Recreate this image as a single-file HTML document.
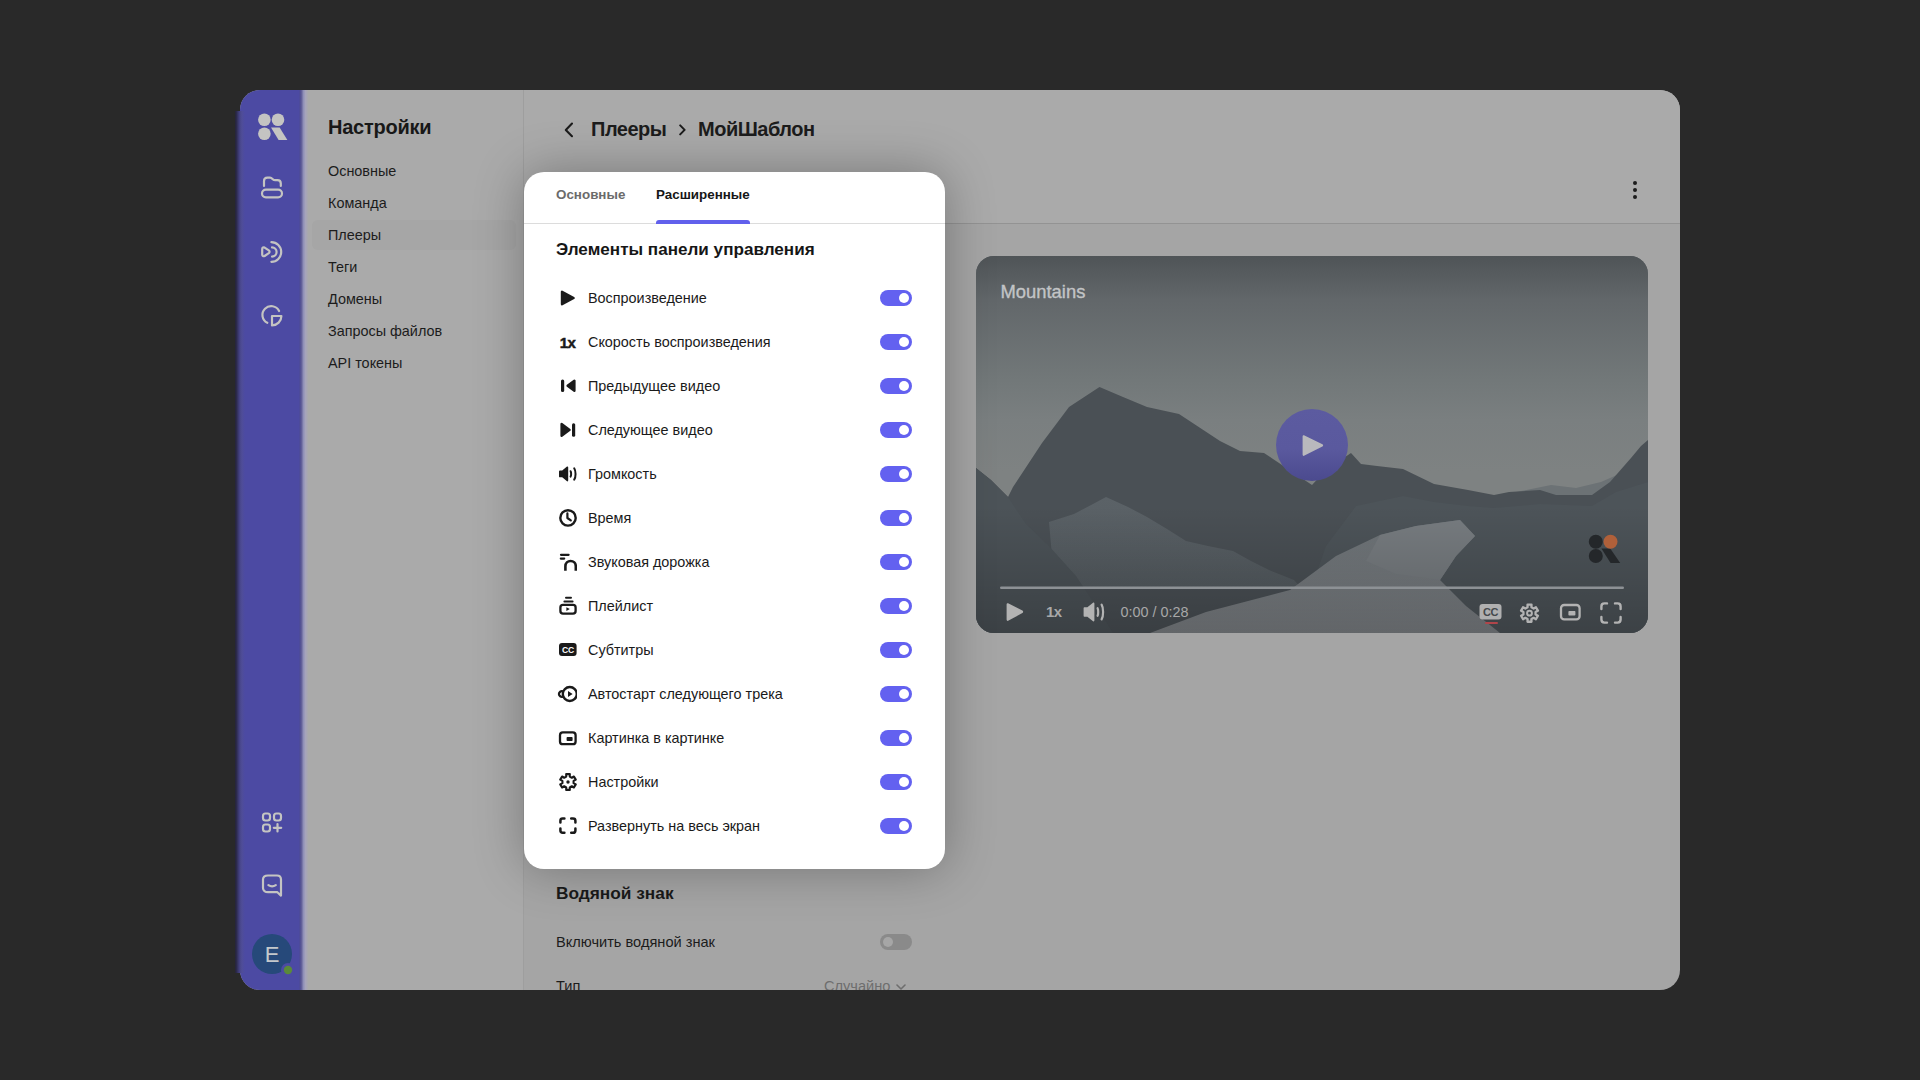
<!DOCTYPE html>
<html><head><meta charset="utf-8">
<style>
*{margin:0;padding:0;box-sizing:border-box}
html,body{width:1920px;height:1080px;overflow:hidden;background:#292929;font-family:"Liberation Sans",sans-serif}
.abs{position:absolute}
.win{position:absolute;left:240px;top:90px;width:1440px;height:900px;border-radius:20px;overflow:hidden;background:#a5a5a5}
.hdr{position:absolute;left:0;top:0;width:1156px;height:133px;background:#aaaaaa}
.side{position:absolute;left:0;top:0;width:64px;height:900px;background:#4c4aa3}
.nav{position:absolute;left:64px;top:0;width:220px;height:900px;background:#aaaaaa;border-right:1px solid #9e9e9e}
.navt{position:absolute;left:24px;top:26px;font-size:20px;letter-spacing:-0.25px;font-weight:bold;color:#181818;white-space:nowrap}
.nav .it{position:absolute;left:8px;width:204px;height:30px;border-radius:6px;font-size:14.4px;color:#1c1c1c;padding-left:16px;line-height:30px;white-space:nowrap}
.nav .it.on{background:#a6a6a6}
.main{position:absolute;left:284px;top:0;width:1156px;height:900px}
.crumb{position:absolute;top:0;font-size:20px;letter-spacing:-0.5px;font-weight:bold;color:#1c1c1c;white-space:nowrap}
.hline{position:absolute;left:0;top:133px;width:1156px;height:1px;background:#939393}
.kebab{position:absolute;width:4px;height:4px;border-radius:50%;background:#1c1c1c}
.wm-h{position:absolute;left:32px;top:793px;font-size:17.3px;font-weight:bold;color:#1a1a1a;white-space:nowrap}
.wm-t{position:absolute;left:32px;font-size:14.6px;color:#1c1c1c;white-space:nowrap}
.tgoff{position:absolute;left:356px;top:844px;width:32px;height:16px;border-radius:8px;background:#8a8a8a}
.tgoff::after{content:"";position:absolute;left:3px;top:3px;width:10px;height:10px;border-radius:50%;background:#a6a6a6}
.shade{position:absolute;left:0;top:0;width:1440px;height:900px;pointer-events:none}
.panel{position:absolute;left:524px;top:172px;width:421px;height:697px;background:#fff;border-radius:20px;box-shadow:0 0 50px rgba(0,0,0,0.3)}
.tab{position:absolute;top:15px;font-size:13.4px;font-weight:bold;white-space:nowrap}
.ph{position:absolute;left:32px;top:68px;font-size:17.1px;font-weight:bold;color:#161616;white-space:nowrap}
.row{position:absolute;left:32px;width:356px;height:44px}
.row .ic{position:absolute;left:1px;top:12px;width:20px;height:20px}
.row .tx{position:absolute;left:32px;top:-0.5px;line-height:44px;font-size:14.4px;color:#1a1a1a;white-space:nowrap}
.tg{position:absolute;left:324px;top:14px;width:32px;height:16px;border-radius:8px;background:#6361f0}
.tg::after{content:"";position:absolute;left:19px;top:3px;width:10px;height:10px;border-radius:50%;background:#fff}

</style></head>
<body>
<div class="win">
  <div class="side">
    <svg class="abs" style="left:0;top:0" width="64" height="900" viewBox="0 0 64 900">
      <g fill="#c4c4c2">
        <circle cx="24.4" cy="29.7" r="6.3"/><circle cx="38" cy="29.7" r="6.3"/><circle cx="24.4" cy="43.7" r="6.3"/>
        <path d="M31 37.4H39.6L47.4 50H38.6Z"/>
      </g>
      <g fill="none" stroke="#c4c4c2" stroke-width="2.2" stroke-linecap="round" stroke-linejoin="round">
        <path d="M24 96V91C24 88.6 25.2 87.6 27.4 87.6H30C31.4 87.6 32 88.4 32.8 89.2C33.5 90 34.2 90.2 35.4 90.2H37.4C39.6 90.2 40.8 91.4 40.8 93.4V96"/>
        <rect x="22" y="99.6" width="20" height="7.8" rx="3.9"/>
        <path d="M22.2 159C22.2 157.6 23.4 157 24.6 157.6L28.8 160.4C29.8 161.2 29.8 162.4 28.8 163.2L24.6 166C23.4 166.6 22.2 166 22.2 164.6Z"/>
        <path d="M32 157.4A4.6 4.6 0 0 1 32 166.6"/>
        <path d="M31.4 152.2A9.8 9.8 0 0 1 31.4 171.8"/>
        <path d="M39.1 221A8.8 8.8 0 1 0 27.3 232.8"/>
        <path d="M32 226H41.4A9.4 9.4 0 0 1 32 235.4Z"/>
        <rect x="23" y="723.5" width="7" height="7" rx="2.4"/>
        <rect x="34" y="723.5" width="7" height="7" rx="2.4"/>
        <rect x="23" y="734.5" width="7" height="7" rx="2.4"/>
        <path d="M37.5 734V741.5M33.8 737.8H41.2"/>
        <path d="M28 785.5H37C39.4 785.5 41 787 41 789.6V805.6L37.4 802.2H28C25.2 802.2 23 800.6 23 798V789.6C23 787 25.2 785.5 28 785.5Z"/>
        <path d="M28.4 795.2C30.8 796.8 33.4 796.8 35.8 795.2"/>
      </g>
      <circle cx="32" cy="864" r="20" fill="#26497a"/>
      <text x="32" y="872.2" text-anchor="middle" font-family="Liberation Sans" font-size="22" fill="#c4c8cc">E</text>
      <circle cx="48" cy="880" r="7" fill="#4c4aa3"/>
      <circle cx="48" cy="880" r="4.2" fill="#5a8a3a"/>
    </svg>
  </div>

  <div class="nav">
    <div class="navt">Настройки</div>
    <div class="it" style="top:66px">Основные</div>
    <div class="it" style="top:98px">Команда</div>
    <div class="it on" style="top:130px">Плееры</div>
    <div class="it" style="top:162px">Теги</div>
    <div class="it" style="top:194px">Домены</div>
    <div class="it" style="top:226px">Запросы файлов</div>
    <div class="it" style="top:258px">API токены</div>
  </div>
  <div class="main">
    <div class="hdr"></div>
    <svg class="abs" style="left:38px;top:31px" width="14" height="18" viewBox="0 0 14 18"><path d="M10 2.6L3.8 8.9L10 15.2" fill="none" stroke="#1c1c1c" stroke-width="2.1" stroke-linecap="round" stroke-linejoin="round"/></svg>
    <div class="crumb" style="left:67px;top:28px">Плееры</div>
    <svg class="abs" style="left:152.5px;top:34px" width="10" height="14" viewBox="0 0 10 14"><path d="M3.2 1.4L7.6 5.9L3.2 10.4" fill="none" stroke="#1c1c1c" stroke-width="2" stroke-linecap="round" stroke-linejoin="round"/></svg>
    <div class="crumb" style="left:174px;top:28px">МойШаблон</div>
    <div class="hline"></div>
    <div class="kebab" style="left:1109px;top:91px"></div>
    <div class="kebab" style="left:1109px;top:98px"></div>
    <div class="kebab" style="left:1109px;top:105px"></div>
    <div class="abs" style="left:452px;top:166px;width:672px;height:377px;border-radius:18px;overflow:hidden;background:#5a6166">
      <svg width="672" height="377" viewBox="0 0 672 377" style="position:absolute;left:0;top:0">
        <defs>
          <linearGradient id="sky" x1="0" y1="0" x2="0" y2="1">
            <stop offset="0" stop-color="#4f5457"/>
            <stop offset="0.117" stop-color="#62676a"/>
            <stop offset="0.33" stop-color="#727879"/>
            <stop offset="0.435" stop-color="#7a7f80"/>
            <stop offset="0.57" stop-color="#7e8282"/>
            <stop offset="1" stop-color="#7e8282"/>
          </linearGradient>
          <linearGradient id="val" x1="0" y1="0" x2="0" y2="1"><stop offset="0" stop-color="#5b6267"/><stop offset="1" stop-color="#545b60"/></linearGradient>
          <linearGradient id="bot" x1="0" y1="0" x2="0" y2="1">
            <stop offset="0" stop-color="#000" stop-opacity="0"/>
            <stop offset="1" stop-color="#000" stop-opacity="0.22"/>
          </linearGradient>
          <linearGradient id="snow" x1="0" y1="0" x2="0" y2="1">
            <stop offset="0" stop-color="#6c7276"/>
            <stop offset="1" stop-color="#7e8286"/>
          </linearGradient>
          <linearGradient id="pb" x1="0" y1="0" x2="0" y2="1">
            <stop offset="0" stop-color="#5c5ba0"/>
            <stop offset="0.55" stop-color="#5a599e"/>
            <stop offset="1" stop-color="#4b4a8e"/>
          </linearGradient>
        </defs>
        <rect width="672" height="377" fill="url(#sky)"/>
        <path d="M540 236L575 229L600 232L625 226L650 215L672 208V270H540Z" fill="#6c7275"/>
        <path d="M0 212L15 224L32 241L37 231L66 187L93 151L123.5 131L147 141L171 151L203 158L244 185L264 195L288 197L306 209L336 229L350 214L375 197L385 208L401 210L427 213L458 228L492 234L518 239L533 236L564 234L580 239L616 239L634 226L655 202L665 190L672 184V377H0Z" fill="#4a5055"/>
        <path d="M73 266L98 258L117 248L130 241L152 251L171 261L191 273L210 285L232 290L257 295L275 305L293 314L318 324L325 332L84 332L76 300Z" fill="url(#val)"/>
        <path d="M380 250L427 240L458 246L492 250L518 252L564 248L616 250L640 236L672 226V377H330L336 330L350 290Z" fill="#4d5459"/>
        <path d="M174 377L230 356L314 334L360 300L404 279L440 270L484 264L499 280L480 300L464 324L490 350L524 377Z" fill="url(#snow)"/>
        <path d="M404 279L440 270L484 264L499 280L480 300L464 324L420 318L390 305Z" fill="#777c80"/>
        <path d="M0 212L15 224L32 241L50 268L73 290L100 320L120 350L137 377H0Z" fill="#4c5358"/>
        <rect y="250" width="672" height="127" fill="url(#bot)"/>
        <circle cx="336" cy="189" r="36" fill="url(#pb)"/>
        <path d="M328.5 179.6C327.6 179 326.6 179.4 326.6 180.6V198.6C326.6 199.8 327.6 200.2 328.5 199.6L346.4 190.4C347.4 189.8 347.4 188.8 346.4 188.2Z" fill="#b9b9bd"/>
        <text x="24.5" y="42" font-family="Liberation Sans" font-size="18.4" fill="#c2c4c6" stroke="#c2c4c6" stroke-width="0.35">Mountains</text>
        <g fill="#24272a">
          <circle cx="619.8" cy="285.7" r="7"/><circle cx="619.8" cy="300" r="7"/>
          <path d="M625.4 292.4H634.2L644.2 307H634.6Z"/>
        </g>
        <circle cx="634.5" cy="285.7" r="7" fill="#b0603a"/>
        <rect x="24" y="330.5" width="624" height="2.6" rx="1.3" fill="#8d9195"/>
        <g fill="#b3b3b3">
          <path d="M32.6 347.6C31.6 346.9 30.6 347.4 30.6 348.6V363.6C30.6 364.8 31.6 365.3 32.6 364.6L46.4 357C47.4 356.4 47.4 355.2 46.4 354.6Z"/>
          <text x="70" y="361.4" font-family="Liberation Sans" font-weight="bold" font-size="15" letter-spacing="-0.6" fill="#a9a9a9">1x</text>
          <path d="M107.6 352.2C107.6 351.6 108 351.2 108.6 351.2H111.4L117 346.8C117.6 346.3 118.4 346.6 118.4 347.4V364.6C118.4 365.4 117.6 365.7 117 365.2L111.4 360.8H108.6C108 360.8 107.6 360.4 107.6 359.8Z"/>
        </g>
        <path d="M121.6 352.2C122.4 353.6 122.4 358.4 121.6 359.8M125.6 348.6C127.6 351.8 127.6 360.2 125.6 363.4" fill="none" stroke="#b3b3b3" stroke-width="2.2" stroke-linecap="round"/>
        <text x="144.5" y="361" font-family="Liberation Sans" font-size="14.4" fill="#a8a8a8">0:00 / 0:28</text>
        <rect x="503.5" y="348" width="22" height="15.4" rx="3" fill="#b0b0b0"/>
        <text x="514.5" y="360" text-anchor="middle" font-family="Liberation Sans" font-weight="bold" font-size="11" letter-spacing="-0.5" fill="#45494c">CC</text>
        <rect x="509" y="366" width="13" height="2" rx="1" fill="#b0454a"/>
        <path d="M555.42 351.30L555.48 348.63L551.52 348.63L551.58 351.30L549.35 352.59L547.06 351.20L545.08 354.63L547.44 355.91L547.44 358.49L545.08 359.77L547.06 363.20L549.35 361.81L551.58 363.10L551.52 365.77L555.48 365.77L555.42 363.10L557.65 361.81L559.94 363.20L561.92 359.77L559.56 358.49L559.56 355.91L561.92 354.63L559.94 351.20L557.65 352.59Z" fill="none" stroke="#b3b3b3" stroke-width="2.3" stroke-linejoin="round"/>
        <circle cx="553.5" cy="357.2" r="2.4" fill="none" stroke="#b3b3b3" stroke-width="2"/>
        <rect x="585" y="349" width="18.6" height="14.4" rx="3.2" fill="none" stroke="#b3b3b3" stroke-width="2.3"/>
        <rect x="592.4" y="355" width="7" height="4.6" rx="0.8" fill="#b3b3b3"/>
        <path d="M625.4 353V350.4C625.4 348.6 626.4 347.4 628.4 347.4H631M639 347.4H641.6C643.4 347.4 644.6 348.6 644.6 350.4V353M644.6 361V363.6C644.6 365.4 643.4 366.6 641.6 366.6H639M631 366.6H628.4C626.4 366.6 625.4 365.4 625.4 363.6V361" fill="none" stroke="#b3b3b3" stroke-width="2.4" stroke-linecap="round"/>
      </svg>
    </div>

    <div class="wm-h">Водяной знак</div>
    <div class="wm-t" style="top:843.5px">Включить водяной знак</div>
    <div class="tgoff"></div>
    <div class="wm-t" style="top:888px">Тип</div>
    <div class="wm-t" style="top:888px;left:300px;color:#6e6e6e">Случайно</div>
    <svg class="abs" style="left:370.5px;top:892px" width="12" height="10" viewBox="0 0 12 10"><path d="M2 3L6 7L10 3" fill="none" stroke="#6e6e6e" stroke-width="1.6" stroke-linecap="round" stroke-linejoin="round"/></svg>
  </div>
  <div class="abs" style="left:59px;top:0;width:10px;height:900px;background:linear-gradient(to right,#4c4aa3 0,#4e4c92 1px,#62609a 2.5px,#9090b8 4.5px,#a6a4bc 6.5px,#aaaaaa 9.5px)"></div>
</div>
<div class="abs" style="left:235px;top:111px;width:11px;height:862px;background:linear-gradient(to right,#242338 0,#2c2a4a 1.5px,#38366a 3px,#48468a 5px,#4f4d98 7px,#4c4aa3 10px)"></div>
<div class="panel">
  <div class="tab" style="left:32px;color:#6b6b6b">Основные</div>
  <div class="tab" style="left:132px;color:#161616">Расширенные</div>
  <div class="abs" style="left:0;top:51px;width:421px;height:1px;background:#dcdcdc"></div>
  <div class="abs" style="left:132px;top:48px;width:94px;height:4px;background:#6160ec;border-radius:3px 3px 0 0"></div>
  <div class="ph">Элементы панели управления</div>
  <div class="row" style="top:104px"><svg class="ic" viewBox="0 0 20 20" width="20" height="20" fill="#1a1a1a"><path d="M5 3.8V16.2L16.6 10Z" stroke="#1a1a1a" stroke-width="2.4" stroke-linejoin="round"/></svg><div class="tx">Воспроизведение</div><div class="tg"></div></div>
  <div class="row" style="top:148px"><svg class="ic" viewBox="0 0 20 20" width="20" height="20" fill="#1a1a1a"><text x="2.8" y="15.7" font-family="Liberation Sans" font-weight="bold" font-size="15" letter-spacing="-0.7" stroke="#1a1a1a" stroke-width="0.5">1x</text></svg><div class="tx">Скорость воспроизведения</div><div class="tg"></div></div>
  <div class="row" style="top:192px"><svg class="ic" viewBox="0 0 20 20" width="20" height="20" fill="#1a1a1a"><rect x="4" y="3.5" width="3.2" height="12.5" rx="1.5"/><path d="M17.4 4.8V14.8L10.6 9.8Z" stroke="#1a1a1a" stroke-width="2.4" stroke-linejoin="round"/></svg><div class="tx">Предыдущее видео</div><div class="tg"></div></div>
  <div class="row" style="top:236px"><svg class="ic" viewBox="0 0 20 20" width="20" height="20" fill="#1a1a1a"><path d="M4.6 4V15.8L12.6 9.9Z" stroke="#1a1a1a" stroke-width="2.4" stroke-linejoin="round"/><rect x="15" y="3.2" width="3.2" height="13.6" rx="1.5"/></svg><div class="tx">Следующее видео</div><div class="tg"></div></div>
  <div class="row" style="top:280px"><svg class="ic" viewBox="0 0 20 20" width="20" height="20" fill="#1a1a1a"><path d="M2 7.4C2 6.9 2.4 6.5 2.9 6.5H5.2L10 2.6C10.5 2.2 11.2 2.5 11.2 3.2V16.6C11.2 17.3 10.5 17.6 10 17.2L5.2 13.3H2.9C2.4 13.3 2 12.9 2 12.4Z"/><path d="M13.6 7.2C14.3 8.4 14.3 11.4 13.6 12.6" fill="none" stroke="#1a1a1a" stroke-width="2" stroke-linecap="round"/><path d="M17.2 4.2C19 6.8 19 13 17.2 15.6" fill="none" stroke="#1a1a1a" stroke-width="2" stroke-linecap="round"/></svg><div class="tx">Громкость</div><div class="tg"></div></div>
  <div class="row" style="top:324px"><svg class="ic" viewBox="0 0 20 20" width="20" height="20" fill="#1a1a1a"><circle cx="11" cy="9.9" r="7.7" fill="none" stroke="#1a1a1a" stroke-width="2.4"/><path d="M10.4 5.4V10L13.8 12.4" fill="none" stroke="#1a1a1a" stroke-width="2.2" stroke-linecap="round" stroke-linejoin="round"/></svg><div class="tx">Время</div><div class="tg"></div></div>
  <div class="row" style="top:368px"><svg class="ic" viewBox="0 0 20 20" width="20" height="20" fill="#1a1a1a"><path d="M4 2.8H11.6M3.8 6.6H7.2" stroke="#1a1a1a" stroke-width="2.2" stroke-linecap="round"/><path d="M8.4 18.8V14.2A5.2 5.2 0 0 1 18.8 14.2V18.8" fill="none" stroke="#1a1a1a" stroke-width="2.6"/></svg><div class="tx">Звуковая дорожка</div><div class="tg"></div></div>
  <div class="row" style="top:412px"><svg class="ic" viewBox="0 0 20 20" width="20" height="20" fill="#1a1a1a"><path d="M9 1.8H14M7.4 5.4H15.6" stroke="#1a1a1a" stroke-width="2" stroke-linecap="round"/><rect x="3.4" y="8.8" width="15.2" height="8.8" rx="2.6" fill="none" stroke="#1a1a1a" stroke-width="2.3"/><path d="M9.4 11.2V15L12.8 13.1Z"/></svg><div class="tx">Плейлист</div><div class="tg"></div></div>
  <div class="row" style="top:456px"><svg class="ic" viewBox="0 0 20 20" width="20" height="20" fill="#1a1a1a"><rect x="2" y="3" width="17.6" height="13" rx="3"/><text x="10.9" y="12.9" text-anchor="middle" font-family="Liberation Sans" font-weight="bold" font-size="8.6" letter-spacing="-0.2" fill="#fff">CC</text></svg><div class="tx">Субтитры</div><div class="tg"></div></div>
  <div class="row" style="top:500px"><svg class="ic" viewBox="0 0 20 20" width="20" height="20" fill="#1a1a1a"><circle cx="12.8" cy="10" r="7" fill="none" stroke="#1a1a1a" stroke-width="2.4"/><path d="M5.8 7.4A2.8 2.8 0 1 0 5.8 12.6" fill="none" stroke="#1a1a1a" stroke-width="2.3"/><path d="M11 7V13L15.6 10Z"/></svg><div class="tx">Автостарт следующего трека</div><div class="tg"></div></div>
  <div class="row" style="top:544px"><svg class="ic" viewBox="0 0 20 20" width="20" height="20" fill="#1a1a1a"><rect x="3" y="4.4" width="15.6" height="11.8" rx="2.8" fill="none" stroke="#1a1a1a" stroke-width="2.3"/><rect x="9.6" y="9" width="6" height="4" rx="0.8"/></svg><div class="tx">Картинка в картинке</div><div class="tg"></div></div>
  <div class="row" style="top:588px"><svg class="ic" viewBox="0 0 20 20" width="20" height="20" fill="#1a1a1a"><path d="M12.76 4.58L12.82 2.11L9.18 2.11L9.24 4.58L7.19 5.76L5.08 4.48L3.25 7.63L5.42 8.81L5.42 11.19L3.25 12.37L5.08 15.52L7.19 14.24L9.24 15.42L9.18 17.89L12.82 17.89L12.76 15.42L14.81 14.24L16.92 15.52L18.75 12.37L16.58 11.19L16.58 8.81L18.75 7.63L16.92 4.48L14.81 5.76Z" fill="none" stroke="#1a1a1a" stroke-width="2.1" stroke-linejoin="round"/><circle cx="11" cy="10" r="1.7" fill="#1a1a1a"/></svg><div class="tx">Настройки</div><div class="tg"></div></div>
  <div class="row" style="top:632px"><svg class="ic" viewBox="0 0 20 20" width="20" height="20" fill="#1a1a1a"><path d="M3.4 6.6V4.8C3.4 3.5 4.2 2.6 5.6 2.6H7.4M14.2 2.6H16C17.3 2.6 18.4 3.5 18.4 4.8V6.6M18.4 12.6V14.4C18.4 15.8 17.3 16.8 16 16.8H14.2M7.4 16.8H5.6C4.2 16.8 3.4 15.8 3.4 14.4V12.6" fill="none" stroke="#1a1a1a" stroke-width="2.5" stroke-linecap="round"/></svg><div class="tx">Развернуть на весь экран</div><div class="tg"></div></div>
</div>
</body></html>
